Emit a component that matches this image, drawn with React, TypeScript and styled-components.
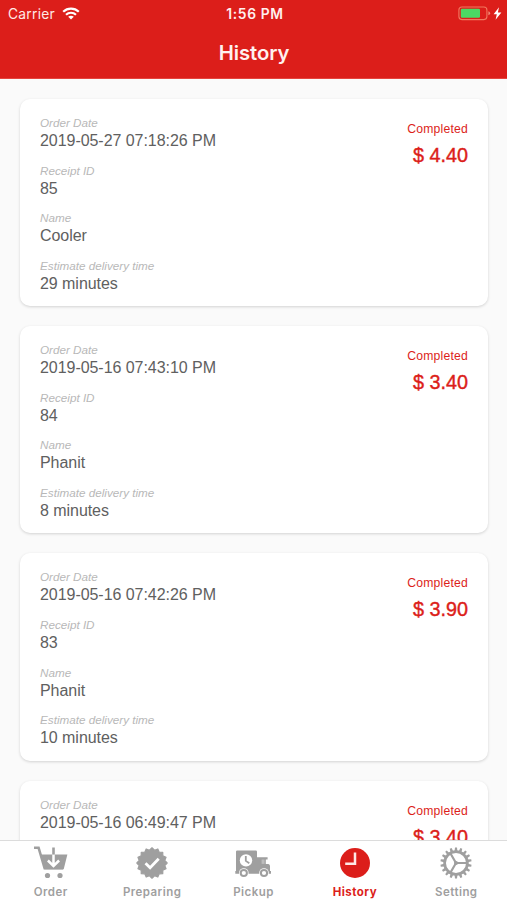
import React from "react";
import styled, { createGlobalStyle } from "styled-components";

const RED = "#dc1e1a";
const GREY = "#9f9f9f";

const GlobalStyle = createGlobalStyle`
  * { box-sizing: border-box; }
  html, body { margin: 0; background: #fafafa; }
  body { overflow: hidden; }
`;

const Screen = styled.div`
  display: flex;
  flex-direction: column;
  width: 507px;
  height: 900px;
  overflow: hidden;
  background: #fafafa;
  font-family: "Liberation Sans", Arial, sans-serif;
`;

const Header = styled.header`
  flex: none;
  height: 79px;
  background: ${RED};
  border-bottom: 1px solid #e5443d;
  color: #fff;
  font-family: Inter, sans-serif;
`;

const StatusBar = styled.div`
  display: grid;
  grid-template-columns: 1fr auto 1fr;
  align-items: center;
  height: 27px;
  padding: 0 5px 0 8px;
`;

const Carrier = styled.div`
  display: flex;
  align-items: center;
  gap: 7px;
  font-size: 13.8px;
  letter-spacing: 0.25px;
  color: #ffe9e6;
`;

const Clock = styled.div`
  font-size: 13.8px;
  font-weight: 600;
  letter-spacing: 0.65px;
  color: #fff0ee;
`;

const Power = styled.div`
  display: flex;
  justify-content: flex-end;
`;

const Title = styled.h1`
  margin: 0;
  line-height: 51px;
  text-align: center;
  font-size: 20.3px;
  font-weight: 600;
  letter-spacing: -0.1px;
  color: #fff1ef;
  padding-left: 1px;
`;

const List = styled.main`
  flex: 1;
  min-height: 0;
  overflow: hidden;
  display: flex;
  flex-direction: column;
  gap: 20px;
  padding: 20px 19px 0 20px;
`;

const Card = styled.article`
  flex: none;
  display: flex;
  justify-content: space-between;
  height: 207.2px;
  padding: 16px 20px 0;
  border-radius: 10px;
  background: #fff;
  box-shadow: 0 1px 3px rgba(0, 0, 0, 0.16);
`;

const Fields = styled.dl`
  margin: 0;
  display: flex;
  flex-direction: column;
  gap: 12.6px;
`;

const Field = styled.div`
  height: 35px;
`;

const Label = styled.dt`
  height: 15px;
  line-height: 15px;
  font-size: 11.7px;
  font-style: italic;
  color: #b8b8b8;
`;

const Value = styled.dd`
  margin: 0;
  line-height: 20px;
  padding-top: 1px;
  font-size: 16px;
  letter-spacing: -0.05px;
  color: #606060;
  white-space: nowrap;
`;

const Summary = styled.div`
  padding-top: 6px;
  text-align: right;
  color: ${RED};
`;

const Status = styled.div`
  line-height: 16px;
  font-size: 12.2px;
  letter-spacing: 0.2px;
`;

const Price = styled.div`
  margin-top: 5px;
  line-height: 26px;
  font-size: 19.8px;
  -webkit-text-stroke: 0.4px ${RED};
`;

const TabBar = styled.nav`
  flex: none;
  display: grid;
  grid-template-columns: repeat(5, 1fr);
  height: 60px;
  border-top: 1px solid #dcdcdc;
  background: #fff;
`;

const Tab = styled.div<{ $active?: boolean }>`
  display: flex;
  flex-direction: column;
  align-items: center;
  padding-top: 5px;
  color: ${(p) => (p.$active ? RED : GREY)};
  svg { display: block; }
`;

const TabLabel = styled.span<{ $active?: boolean }>`
  margin-top: 4px;
  line-height: 16px;
  font-family: Inter, sans-serif;
  font-size: 11.5px;
  letter-spacing: 0.45px;
  font-weight: ${(p) => (p.$active ? 700 : 600)};
`;

const WifiIcon = () => (
  <svg width="18" height="13" viewBox="0 0 18 13" fill="none" stroke="#fff" strokeWidth="2.2">
    <path d="M1.2 4.7C5.6.5 12.4.5 16.8 4.7" />
    <path d="M4 7.7c2.8-2.6 7.2-2.6 10 0" />
    <path d="M9 12.6 6.2 9.8c1.6-1.4 4-1.4 5.6 0z" fill="#fff" stroke="none" />
  </svg>
);

const BatteryIcon = () => (
  <svg width="44" height="15" viewBox="0 0 44 15">
    <rect x="0.9" y="1" width="28" height="12.6" rx="3" fill="none" stroke="#f0785f" strokeWidth="1.1" />
    <rect x="2.8" y="2.8" width="19.2" height="9" rx="1.2" fill="#4cd964" />
    <path d="M30.4 5.3q1.7.6 1.7 2t-1.7 2z" fill="#f08c78" />
    <path d="M41 1.2 35.6 8.3h3.2l-1.2 5.4L43.4 6.4h-3.5z" fill="#fff" />
  </svg>
);

const CartIcon = () => (
  <svg width="34" height="34" viewBox="0 0 34 34">
    <path d="M0 1.8h4.6l6 20.4H29" fill="none" stroke={GREY} strokeWidth="2.5" />
    <path d="M6.2 8.6h27.2l-3.7 14.7H10.5z" fill={GREY} />
    <path d="M19.5 7v12.6M13.9 14.5l5.6 5.5 5.6-5.5" fill="none" stroke="#fff" strokeWidth="2.5" />
    <path d="M19.5 1.5v7.1" stroke={GREY} strokeWidth="2.6" />
    <circle cx="13.5" cy="29.5" r="2.6" fill={GREY} />
    <circle cx="26" cy="29.5" r="2.6" fill={GREY} />
  </svg>
);

/** Closed outline alternating between two radii around (17, 17). */
const starPath = (count: number, outer: number, inner: number) => {
  const points = Array.from({ length: count * 2 }, (_, i) => {
    const r = i % 2 ? inner : outer;
    const a = (Math.PI * i) / count - Math.PI / 2;
    return `${(17 + r * Math.cos(a)).toFixed(2)} ${(17 + r * Math.sin(a)).toFixed(2)}`;
  });
  return `M${points.join("L")}Z`;
};

const BadgeIcon = () => (
  <svg width="34" height="34" viewBox="0 0 34 34">
    <path d={starPath(16, 15.2, 13)} fill={GREY} stroke={GREY} strokeWidth="1.2" strokeLinejoin="round" />
    <path d="m10.5 17.2 4.6 4.6 8.6-9" fill="none" stroke="#fff" strokeWidth="2.8" />
  </svg>
);

const TruckIcon = () => (
  <svg width="36" height="34" viewBox="0 0 36 34">
    <path
      d="M2.2 4.6h18.6q1.2 0 1.2 1.2v5.4h10.6v2.3h-1.8v4.4h2.6q1.6.6 1.6 2.2v5h1v2.6H.3v-2.6H1V5.8q0-1.2 1.2-1.2z"
      fill={GREY}
    />
    <path d="M26.6 13.5h3v4.4h-3z" fill="#bdbdbd" />
    <circle cx="11" cy="14.4" r="6.2" fill="#fff" />
    <path d="M10.8 10v4.9l3.5 2.4" fill="none" stroke={GREY} strokeWidth="1.8" />
    <circle cx="8.8" cy="27" r="4.8" fill="#fff" />
    <circle cx="29" cy="27" r="4.8" fill="#fff" />
    <circle cx="8.8" cy="27" r="3.1" fill="#fff" stroke={GREY} strokeWidth="2" />
    <circle cx="29" cy="27" r="3.1" fill="#fff" stroke={GREY} strokeWidth="2" />
  </svg>
);

const ClockIcon = () => (
  <svg width="34" height="34" viewBox="0 0 34 34">
    <circle cx="17" cy="17" r="15" fill={RED} />
    <path d="M17 6.5v11.2H7.2" fill="none" stroke="#ffe9e6" strokeWidth="2.5" />
  </svg>
);

const GearIcon = () => (
  <svg width="34" height="34" viewBox="0 0 34 34" fill="none" stroke={GREY}>
    {Array.from({ length: 18 }, (_, i) => (
      <path key={i} d="m15.6 5 .4-3.6h2l.4 3.6z" fill={GREY} stroke="none" transform={`rotate(${i * 20} 17 17)`} />
    ))}
    <circle cx="17" cy="17" r="11.4" strokeWidth="2.7" />
    <path d="M17 17h11.5M17 17 11.2 7M17 17l-5.8 10" strokeWidth="2.2" />
    <circle cx="17" cy="17" r="2" fill={GREY} stroke="none" />
  </svg>
);

const orders = [
  { date: "2019-05-27 07:18:26 PM", id: "85", name: "Cooler", time: "29 minutes", price: "$ 4.40" },
  { date: "2019-05-16 07:43:10 PM", id: "84", name: "Phanit", time: "8 minutes", price: "$ 3.40" },
  { date: "2019-05-16 07:42:26 PM", id: "83", name: "Phanit", time: "10 minutes", price: "$ 3.90" },
];

const partialOrder = { date: "2019-05-16 06:49:47 PM", price: "$ 3.40" };

type Order = { date: string; price: string; id?: string; name?: string; time?: string };

const OrderCard = ({ order }: { order: Order }) => {
  const fields: [string, string | undefined][] = [
    ["Order Date", order.date],
    ["Receipt ID", order.id],
    ["Name", order.name],
    ["Estimate delivery time", order.time],
  ];
  return (
    <Card>
      <Fields>
        {fields
          .filter(([, value]) => value)
          .map(([label, value]) => (
            <Field key={label}>
              <Label>{label}</Label>
              <Value>{value}</Value>
            </Field>
          ))}
      </Fields>
      <Summary>
        <Status>Completed</Status>
        <Price>{order.price}</Price>
      </Summary>
    </Card>
  );
};

const tabs = [
  { label: "Order", Icon: CartIcon },
  { label: "Preparing", Icon: BadgeIcon },
  { label: "Pickup", Icon: TruckIcon },
  { label: "History", Icon: ClockIcon, active: true },
  { label: "Setting", Icon: GearIcon },
];

export default function App() {
  return (
    <Screen>
      <GlobalStyle />
      <Header>
        <StatusBar>
          <Carrier>
            Carrier
            <WifiIcon />
          </Carrier>
          <Clock>1:56 PM</Clock>
          <Power>
            <BatteryIcon />
          </Power>
        </StatusBar>
        <Title>History</Title>
      </Header>
      <List>
        {[...orders, partialOrder].map((order) => (
          <OrderCard key={order.date} order={order} />
        ))}
      </List>
      <TabBar>
        {tabs.map(({ label, Icon, active }) => (
          <Tab key={label} $active={active}>
            <Icon />
            <TabLabel $active={active}>{label}</TabLabel>
          </Tab>
        ))}
      </TabBar>
    </Screen>
  );
}
